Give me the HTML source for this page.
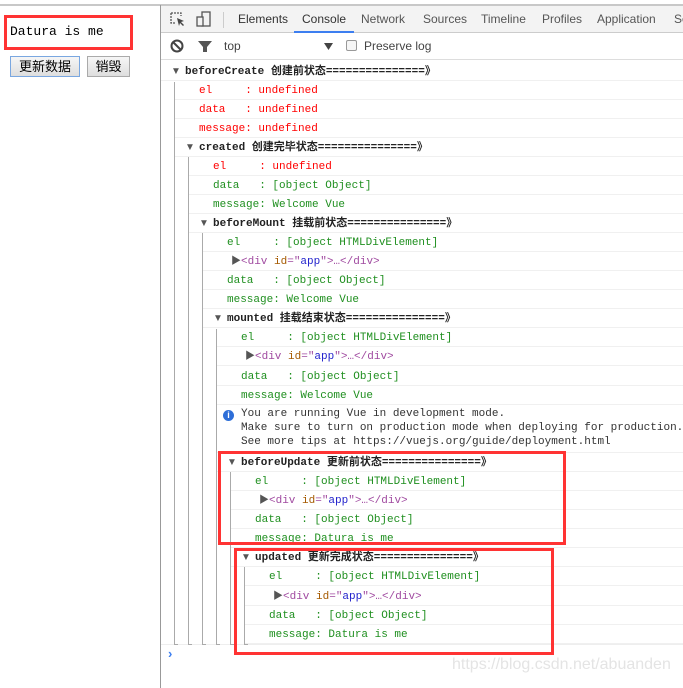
<!DOCTYPE html>
<html><head><meta charset="utf-8"><style>
*{margin:0;padding:0;box-sizing:border-box}
body{width:683px;height:688px;background:#fff;position:relative;overflow:hidden;font-family:"Liberation Sans","Noto Sans CJK SC",sans-serif}
.a{position:absolute;white-space:pre}
.m{font-family:"Liberation Mono","Noto Sans CJK SC",monospace;font-size:11px;line-height:19px;padding-top:1px}
.r{position:absolute;height:19px;right:0;border-bottom:1px solid #f0f0f0}
.vl{position:absolute;width:1px;background:#aaa}
.tk{position:absolute;height:1px;width:4px;background:#aaa}
.red{color:#f00}.grn{color:#1f8f1f}
.h{color:#222}.h b{font-weight:bold}
.tri{position:absolute;font-size:10px;color:#555;line-height:19px}
.tag{color:#a04aa0}.att{color:#a55a00}.val{color:#2222cc}
.box{position:absolute;border:3px solid #f33}
</style></head><body>
<div style="position:absolute;left:0;top:4px;width:683px;height:2px;background:#c8c8c8"></div>
<div style="position:absolute;left:160px;top:5px;width:1px;height:683px;background:#999"></div>
<div class="a m" style="left:10px;top:22px;font-size:13px;line-height:20px;padding:0">Datura is me</div>
<div class="box" style="left:4px;top:15px;width:129px;height:35px"></div>
<div class="a" style="left:10px;top:56px;width:70px;height:21px;border:1px solid #7aa7e0;background:linear-gradient(#f6f6f6,#dedede);font-size:13px;line-height:19px;text-align:center">更新数据</div>
<div class="a" style="left:87px;top:56px;width:43px;height:21px;border:1px solid #aaa;background:linear-gradient(#f6f6f6,#dedede);font-size:13px;line-height:19px;text-align:center">销毁</div>

<div style="position:absolute;left:161px;top:6px;right:0;height:27px;background:#f3f3f3;border-bottom:1px solid #ccc"></div>
<svg class="a" style="left:170px;top:12px" width="16" height="16"><path d="M1 1h10v3M1 1v10h4" fill="none" stroke="#555" stroke-width="1.3" stroke-dasharray="2 1"/><path d="M7 6l7 3-3 1 3 3-1 1-3-3-1 3z" fill="#444"/></svg>
<svg class="a" style="left:196px;top:11px" width="16" height="18"><rect x="6" y="1" width="8" height="14" fill="none" stroke="#555" stroke-width="1.3"/><rect x="1" y="6" width="6" height="9" fill="#f3f3f3" stroke="#555" stroke-width="1.3"/></svg>
<div style="position:absolute;left:223px;top:12px;width:1px;height:16px;background:#ccc"></div>
<div class="a" style="left:238px;top:12px;font-size:12px;color:#333">Elements</div>
<div class="a" style="left:302px;top:12px;font-size:12px;color:#333">Console</div>
<div style="position:absolute;left:294px;top:31px;width:60px;height:2px;background:#3c7ef0"></div>
<div class="a" style="left:361px;top:12px;font-size:12px;color:#555">Network</div>
<div class="a" style="left:423px;top:12px;font-size:12px;color:#555">Sources</div>
<div class="a" style="left:481px;top:12px;font-size:12px;color:#555">Timeline</div>
<div class="a" style="left:542px;top:12px;font-size:12px;color:#555">Profiles</div>
<div class="a" style="left:597px;top:12px;font-size:12px;color:#555">Application</div>
<div class="a" style="left:674px;top:12px;font-size:12px;color:#555">Se</div>

<div style="position:absolute;left:161px;top:33px;right:0;height:27px;border-bottom:1px solid #ddd"></div>
<svg class="a" style="left:170px;top:39px" width="14" height="14"><circle cx="7" cy="7" r="5.5" fill="none" stroke="#444" stroke-width="2"/><path d="M3 3l8 8" stroke="#444" stroke-width="2"/></svg>
<svg class="a" style="left:197px;top:40px" width="16" height="13"><path d="M1 1h14l-5 6v5h-4v-5z" fill="#555"/></svg>
<div class="a" style="left:224px;top:39px;font-size:12px;color:#444">top</div>
<svg class="a" style="left:324px;top:43px" width="9" height="7"><path d="M0 0h9l-4.5 7z" fill="#444"/></svg>
<div class="a" style="left:346px;top:40px;width:11px;height:11px;border:1px solid #999;border-radius:2px;background:#f6f6f6"></div>
<div class="a" style="left:364px;top:39px;font-size:12px;color:#444">Preserve log</div>

<div class="r" style="left:161px;top:62px"></div>
<div class="tri a" style="left:171px;top:62px">▼</div>
<div class="a m h" style="left:185px;top:62px"><b>beforeCreate 创建前状态===============》</b></div>

<div class="r" style="left:174px;top:81px"></div><div class="a m red" style="left:199px;top:81px">el     : undefined</div>
<div class="r" style="left:174px;top:100px"></div><div class="a m red" style="left:199px;top:100px">data   : undefined</div>
<div class="r" style="left:174px;top:119px"></div><div class="a m red" style="left:199px;top:119px">message: undefined</div>
<div class="r" style="left:174px;top:138px"></div><div class="tri a" style="left:185px;top:138px">▼</div><div class="a m h" style="left:199px;top:138px"><b>created 创建完毕状态===============》</b></div>

<div class="r" style="left:188px;top:157px"></div><div class="a m red" style="left:213px;top:157px">el     : undefined</div>
<div class="r" style="left:188px;top:176px"></div><div class="a m grn" style="left:213px;top:176px">data   : [object Object]</div>
<div class="r" style="left:188px;top:195px"></div><div class="a m grn" style="left:213px;top:195px">message: Welcome Vue</div>
<div class="r" style="left:188px;top:214px"></div><div class="tri a" style="left:199px;top:214px">▼</div><div class="a m h" style="left:213px;top:214px"><b>beforeMount 挂载前状态===============》</b></div>

<div class="r" style="left:202px;top:233px"></div><div class="a m grn" style="left:227px;top:233px">el     : [object HTMLDivElement]</div>
<div class="r" style="left:202px;top:252px"></div><div class="tri a" style="left:231px;top:252px">▶</div><div class="a m" style="left:241px;top:252px"><span class="tag">&lt;div </span><span class="att">id</span><span class="tag">="</span><span class="val">app</span><span class="tag">"&gt;…&lt;/div&gt;</span></div>
<div class="r" style="left:202px;top:271px"></div><div class="a m grn" style="left:227px;top:271px">data   : [object Object]</div>
<div class="r" style="left:202px;top:290px"></div><div class="a m grn" style="left:227px;top:290px">message: Welcome Vue</div>
<div class="r" style="left:202px;top:309px"></div><div class="tri a" style="left:213px;top:309px">▼</div><div class="a m h" style="left:227px;top:309px"><b>mounted 挂载结束状态===============》</b></div>

<div class="r" style="left:216px;top:328px"></div><div class="a m grn" style="left:241px;top:328px">el     : [object HTMLDivElement]</div>
<div class="r" style="left:216px;top:347px"></div><div class="tri a" style="left:245px;top:347px">▶</div><div class="a m" style="left:255px;top:347px"><span class="tag">&lt;div </span><span class="att">id</span><span class="tag">="</span><span class="val">app</span><span class="tag">"&gt;…&lt;/div&gt;</span></div>
<div class="r" style="left:216px;top:367px"></div><div class="a m grn" style="left:241px;top:367px">data   : [object Object]</div>
<div class="r" style="left:216px;top:386px"></div><div class="a m grn" style="left:241px;top:386px">message: Welcome Vue</div>
<div class="r" style="left:216px;top:405px;height:48px"></div>
<div class="a" style="left:223px;top:410px;width:11px;height:11px;border-radius:50%;background:#2d6ed8;color:#fff;font-size:9px;line-height:11px;text-align:center;font-weight:bold">i</div>
<div class="a m" style="left:241px;top:407px;line-height:14px;color:#333;padding:0">You are running Vue in development mode.
Make sure to turn on production mode when deploying for production.
See more tips at https://vuejs.org/guide/deployment.html</div>
<div class="r" style="left:216px;top:453px"></div><div class="tri a" style="left:227px;top:453px">▼</div><div class="a m h" style="left:241px;top:453px"><b>beforeUpdate 更新前状态===============》</b></div>

<div class="r" style="left:230px;top:472px"></div><div class="a m grn" style="left:255px;top:472px">el     : [object HTMLDivElement]</div>
<div class="r" style="left:230px;top:491px"></div><div class="tri a" style="left:259px;top:491px">▶</div><div class="a m" style="left:269px;top:491px"><span class="tag">&lt;div </span><span class="att">id</span><span class="tag">="</span><span class="val">app</span><span class="tag">"&gt;…&lt;/div&gt;</span></div>
<div class="r" style="left:230px;top:510px"></div><div class="a m grn" style="left:255px;top:510px">data   : [object Object]</div>
<div class="r" style="left:230px;top:529px"></div><div class="a m grn" style="left:255px;top:529px">message: Datura is me</div>
<div class="r" style="left:230px;top:548px"></div><div class="tri a" style="left:241px;top:548px">▼</div><div class="a m h" style="left:255px;top:548px"><b>updated 更新完成状态===============》</b></div>

<div class="r" style="left:244px;top:567px"></div><div class="a m grn" style="left:269px;top:567px">el     : [object HTMLDivElement]</div>
<div class="r" style="left:244px;top:587px"></div><div class="tri a" style="left:273px;top:587px">▶</div><div class="a m" style="left:283px;top:587px"><span class="tag">&lt;div </span><span class="att">id</span><span class="tag">="</span><span class="val">app</span><span class="tag">"&gt;…&lt;/div&gt;</span></div>
<div class="r" style="left:244px;top:606px"></div><div class="a m grn" style="left:269px;top:606px">data   : [object Object]</div>
<div class="r" style="left:244px;top:625px"></div><div class="a m grn" style="left:269px;top:625px">message: Datura is me</div>
<div class="r" style="left:161px;top:644px;height:1px;border:0;background:#eee"></div>

<div class="vl" style="left:174px;top:82px;height:562px"></div><div class="tk" style="left:174px;top:644px"></div>
<div class="vl" style="left:188px;top:157px;height:487px"></div><div class="tk" style="left:188px;top:644px"></div>
<div class="vl" style="left:202px;top:233px;height:411px"></div><div class="tk" style="left:202px;top:644px"></div>
<div class="vl" style="left:216px;top:329px;height:315px"></div><div class="tk" style="left:216px;top:644px"></div>
<div class="vl" style="left:230px;top:472px;height:172px"></div><div class="tk" style="left:230px;top:644px"></div>
<div class="vl" style="left:244px;top:567px;height:77px"></div><div class="tk" style="left:244px;top:644px"></div>

<div class="a" style="left:168px;top:646px;color:#3c7ef0;font-size:13px;font-weight:bold">›</div>
<div class="a" style="left:452px;top:656px;color:#e4e4e4;font-size:16px">https://blog.csdn.net/abuanden</div>

<div class="box" style="left:218px;top:451px;width:348px;height:94px"></div>
<div class="box" style="left:234px;top:548px;width:320px;height:107px"></div>
</body></html>
